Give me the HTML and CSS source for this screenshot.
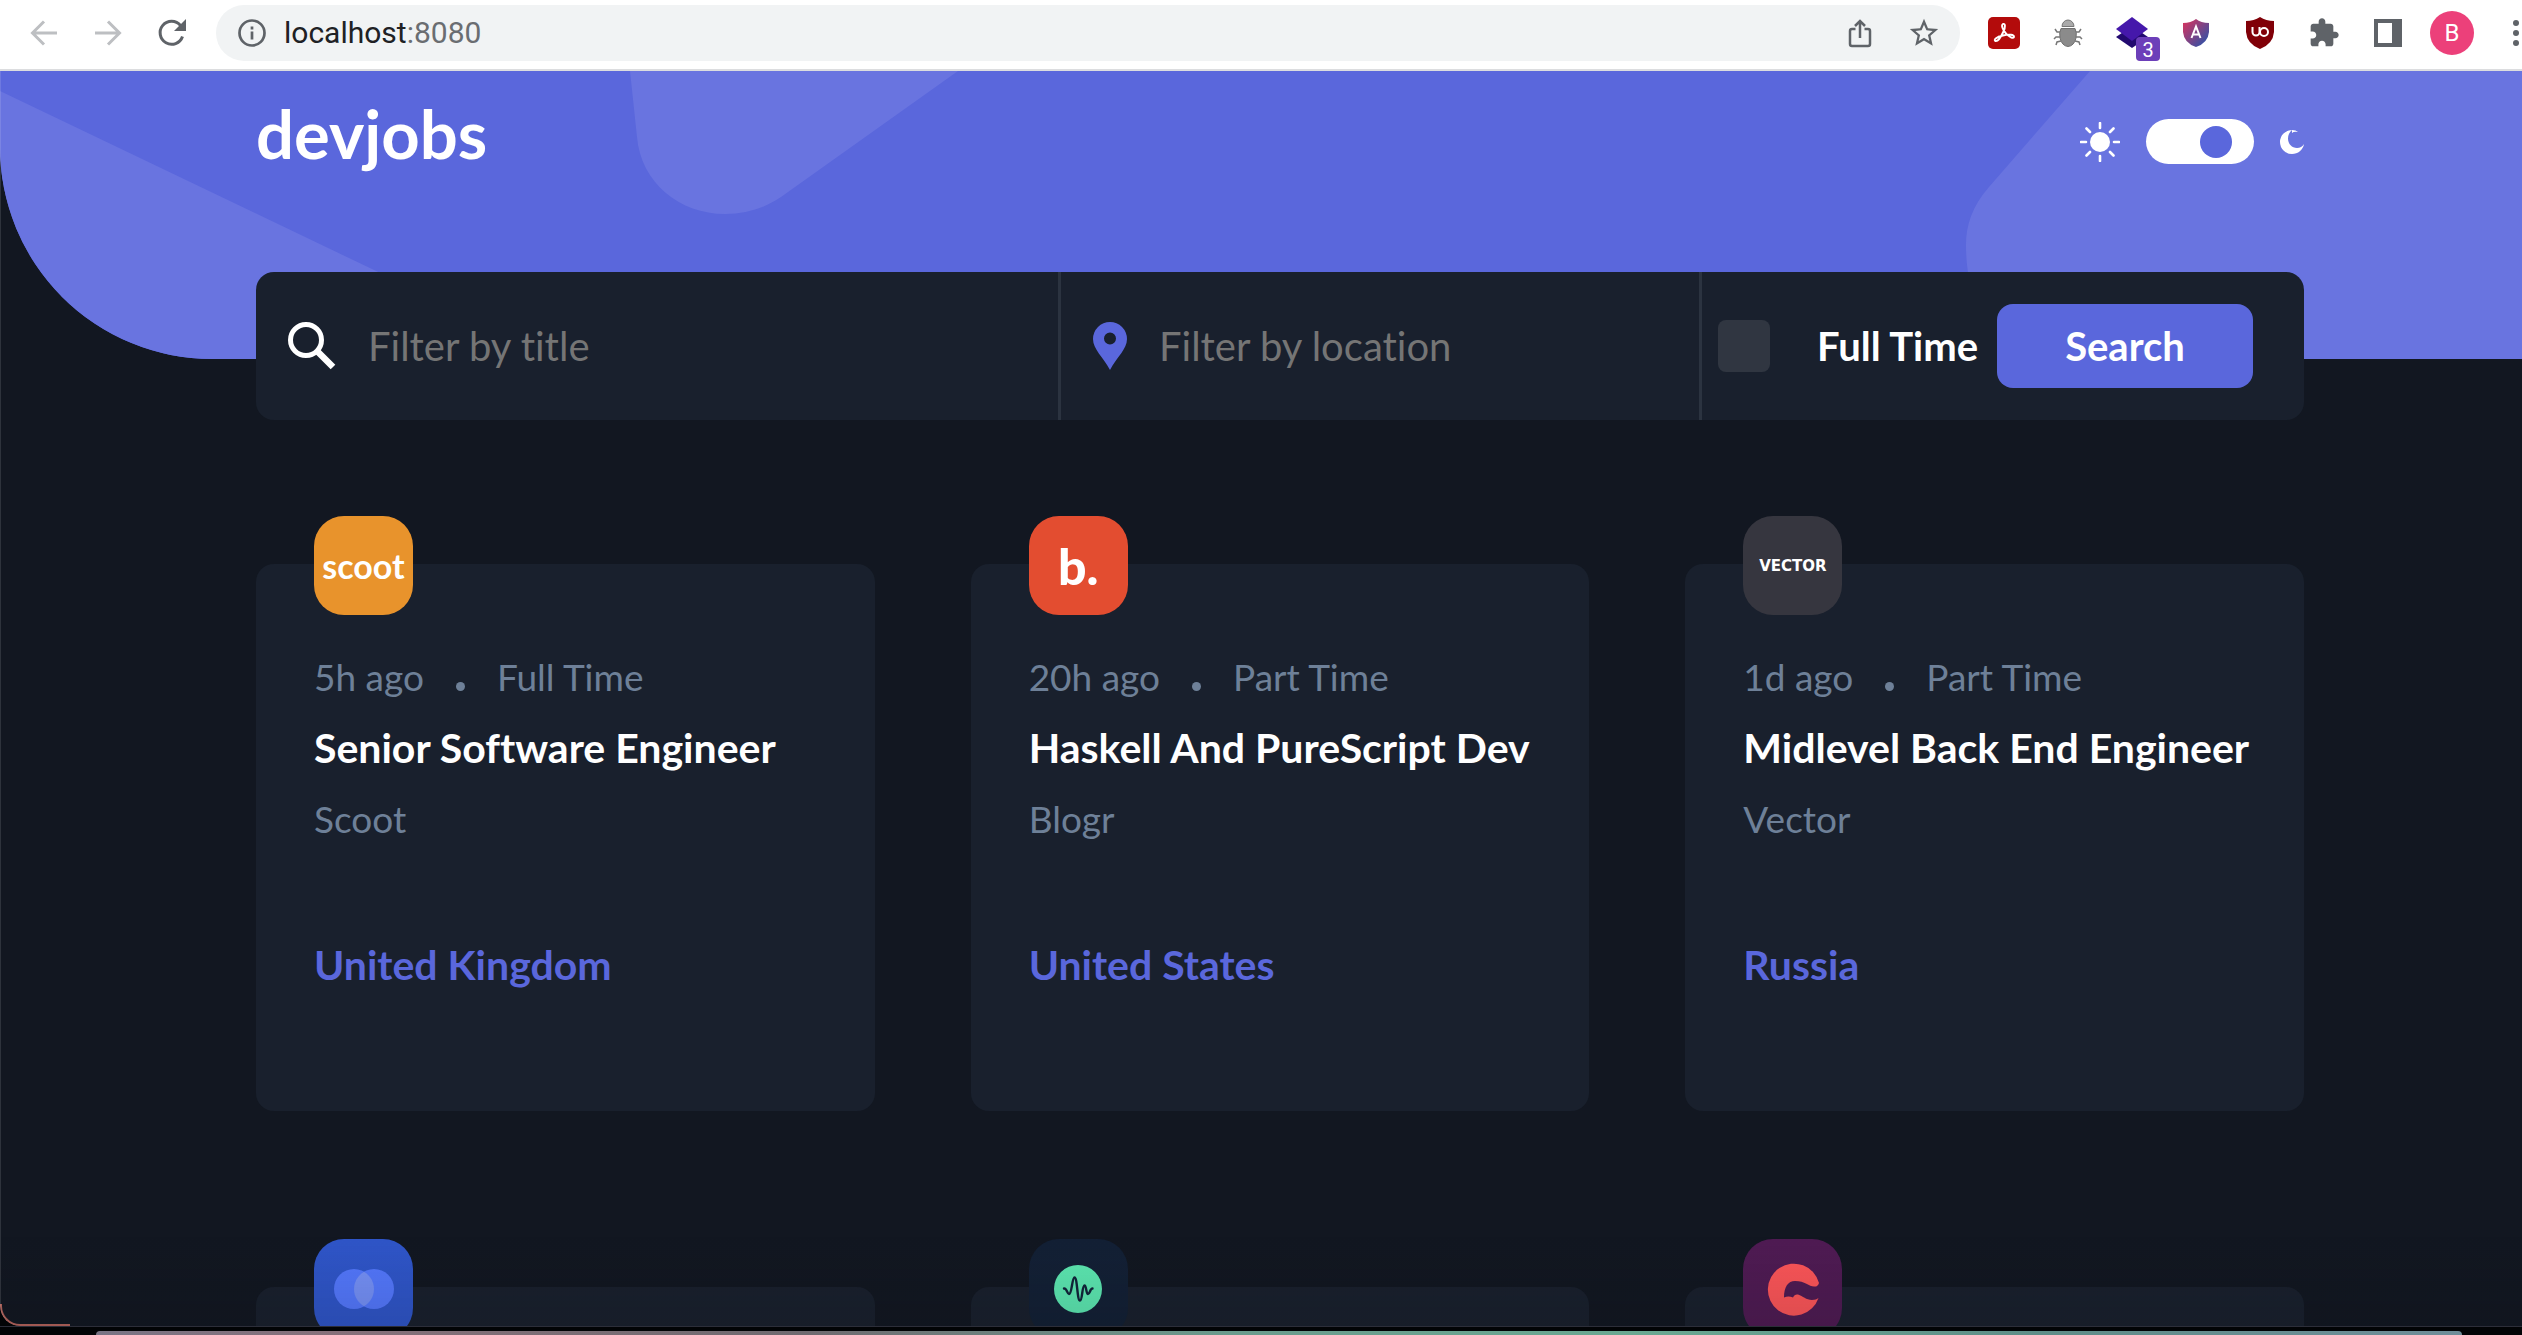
FILE: index.html
```html
<!DOCTYPE html>
<html lang="en">
<head>
<meta charset="utf-8">
<meta name="viewport" content="width=device-width, initial-scale=1">
<title>devjobs</title>
<link rel="stylesheet" href="styles.css">
</head>
<body>
<div class="toolbar">
  <div class="toolbar-group">
    <button class="tool" type="button" aria-label="Back" disabled>
      <svg width="28" height="28" viewBox="0 0 28 28" fill="none" stroke="#bdbfc2" stroke-width="3"><path d="M27 14H3M14 2.500 2.500 14 14 25.500"/></svg>
    </button>
    <button class="tool" type="button" aria-label="Forward" disabled>
      <svg width="28" height="28" viewBox="0 0 28 28" fill="none" stroke="#bdbfc2" stroke-width="3"><path d="M1 14H25M14 2.500 25.500 14 14 25.500"/></svg>
    </button>
    <button class="tool" type="button" aria-label="Reload">
      <svg width="30" height="30" viewBox="0 0 30 30" fill="none"><path d="M25.500 18.500A11.500 11.500 0 1 1 23.500 7.500" stroke="#5f6368" stroke-width="3"/><path d="M29 1V13H17Z" fill="#5f6368"/></svg>
    </button>
  </div>
  <div class="address">
    <svg width="28" height="28" viewBox="0 0 28 28" fill="none" stroke="#5f6368" stroke-width="2.700"><circle cx="14" cy="14" r="12.500"/><path d="M14 12.500V20.500M14 7.500V10.500"/></svg>
    <span class="address-text">localhost<span class="address-port">:8080</span></span>
    <button class="tool" type="button" aria-label="Share">
      <svg width="24" height="30" viewBox="0 0 24 30" fill="none" stroke="#5f6368" stroke-width="2.500"><path d="M7.500 11H4Q2 11 2 13V26Q2 28 4 28H20Q22 28 22 26V13Q22 11 20 11H16.500M12 20V3M7 8 12 3 17 8"/></svg>
    </button>
    <button class="tool" type="button" aria-label="Bookmark">
      <svg width="34" height="34" viewBox="0 0 24 24" fill="#5f6368"><path d="M22 9.240l-7.190-.62L12 2 9.190 8.630 2 9.240l5.460 4.730L5.820 21 12 17.270 18.180 21l-1.630-7.030L22 9.240zM12 15.400l-3.760 2.270 1-4.280-3.320-2.880 4.380-.38L12 6.100l1.710 4.040 4.380.38-3.320 2.880 1 4.280L12 15.400z"/></svg>
    </button>
  </div>
  <div class="toolbar-group">
    <button class="tool" type="button" aria-label="PDF">
      <svg width="32" height="32" viewBox="0 0 32 32"><rect width="32" height="32" rx="5" fill="#b30b0b"/><path d="M15 7C17.500 6 17.500 10 15.500 14.500 13 20 9.500 24.500 7.500 24 5 23 9 19.500 15 18.500 21 17 26.500 17.500 26 20 25.500 22 21 20 18 16.500 14.500 13 13 8 15 7Z" fill="none" stroke="#fff" stroke-width="1.900"/></svg>
    </button>
    <button class="tool" type="button" aria-label="Bug tracker">
      <svg width="30" height="30" viewBox="0 0 30 30"><path d="M9 8.500A6 6.500 0 0 1 21 8.500Z" fill="#aaa" stroke="#777"/><path d="M8 10.500H22Q24 14 23 20 21 28 15 28.500 9 28 7 20 6 14 8 10.500Z" fill="#8b8b8b" stroke="#707070"/><path d="M7 14 4 14 2 11M7 19H3L1 21M8 23 4 24 3 27M23 14 26 14 28 11M23 19H27L29 21M22 23 26 24 27 27" fill="none" stroke="#777" stroke-width="1.500"/></svg>
    </button>
    <button class="tool layers" type="button" aria-label="Layers">
      <svg width="32" height="32" viewBox="0 0 32 32"><path d="M0 20 16 9 32 20 16 31Z" fill="#230a70"/><path d="M0 12 16 0 32 12 16 24Z" fill="#4518ab"/></svg>
      <span class="layers-count">3</span>
    </button>
    <button class="tool" type="button" aria-label="Accessibility audit">
      <svg width="26" height="28" viewBox="0 0 26 28"><defs><linearGradient id="shield" x1="0" y1="0" x2="1" y2="1"><stop offset="0" stop-color="#e0325a"/><stop offset="1" stop-color="#1a55b0"/></linearGradient></defs><path d="M13 0Q18 4 26 4V13Q25 24 13 28 1 24 0 13V4Q8 4 13 0Z" fill="url(#shield)"/><path d="M8.500 19 13 7.500 17.500 19M10 15.500H16" fill="none" stroke="#fff" stroke-width="2"/></svg>
    </button>
    <button class="tool" type="button" aria-label="Content blocker">
      <svg width="28" height="32" viewBox="0 0 28 32"><path d="M14 0Q20 4 28 4V15Q27 27 14 32 1 27 0 15V4Q8 4 14 0Z" fill="#800008"/><path d="M6.500 10V15A3.500 3.500 0 0 0 13.500 15V10" fill="none" stroke="#fff" stroke-width="2"/><circle cx="18" cy="15" r="4" fill="none" stroke="#fff" stroke-width="2"/></svg>
    </button>
    <button class="tool" type="button" aria-label="Extensions">
      <svg width="32" height="32" viewBox="0 0 24 24" fill="#5f6368"><path d="M20.500 11H19V7c0-1.100-.9-2-2-2h-4V3.500C13 2.120 11.880 1 10.500 1S8 2.120 8 3.500V5H4c-1.100 0-2 .9-2 2v3.800h1.500c1.500 0 2.700 1.200 2.700 2.700S5 16.200 3.500 16.200H2V20c0 1.100.9 2 2 2h3.800v-1.500c0-1.500 1.200-2.700 2.700-2.700s2.700 1.200 2.700 2.700V22H17c1.100 0 2-.9 2-2v-4h1.500c1.380 0 2.500-1.120 2.500-2.500S21.880 11 20.500 11z"/></svg>
    </button>
    <button class="tool" type="button" aria-label="Side panel">
      <svg width="28" height="28" viewBox="0 0 28 28"><path d="M0 0H28V28H0ZM4 4V24H18V4Z" fill="#5f6368" fill-rule="evenodd"/></svg>
    </button>
    <button class="tool" type="button" aria-label="Profile"><span class="avatar">B</span></button>
    <button class="tool tool-menu" type="button" aria-label="Menu">
      <svg width="12" height="28" viewBox="0 0 12 28" fill="#5f6368"><circle cx="6" cy="4" r="3"/><circle cx="6" cy="14" r="3"/><circle cx="6" cy="24" r="3"/></svg>
    </button>
  </div>
</div>

<div class="page">
  <header class="hero">
    <svg class="hero-art" viewBox="0 0 2522 288" preserveAspectRatio="xMinYMin slice" fill="#6974e0">
      <path d="M0 20 560 288H0Z"/>
      <path d="M630 0 637 66C641 112 680 143 725 143 750 143 770 135 788 121L958 0Z"/>
      <path d="M2090 0 1989 116C1972 135 1966 155 1966 174 1966 225 1985 262 2020 288H2522V0Z"/>
    </svg>
    <div class="hero-row">
      <a class="brand" href="#">devjobs</a>
      <div class="theme">
        <svg width="40" height="40" viewBox="0 0 40 40"><circle cx="20" cy="20" r="10" fill="#fff"/><path d="M20 1V6M20 34V39M1 20H6M34 20H39M6.500 6.500 10 10M30 30 33.500 33.500M6.500 33.500 10 30M30 10 33.500 6.500" stroke="#fff" stroke-width="2.600" stroke-linecap="round"/></svg>
        <input class="theme-switch" type="checkbox" role="switch" aria-label="Dark theme" checked>
        <svg width="24" height="24" viewBox="0 0 24 24"><path d="M12 0C9.500 2 8 5 8 8.500 8 14 12 18 17 18 20 18 22.500 16.500 24 14 23 20 18 24 12 24A12 12 0 0 1 12 0ZM12 0Q16 0 18 2 14 1 12 3Z" fill="#fff"/></svg>
      </div>
    </div>
  </header>

  <main class="content">
    <form class="filters">
      <label class="filter">
        <svg width="48" height="48" viewBox="0 0 48 48" fill="none" stroke="#fff"><circle cx="18" cy="18" r="15.500" stroke-width="5"/><path d="M30 30 45 45" stroke-width="6.500"/></svg>
        <input class="filter-input" type="text" placeholder="Filter by title" aria-label="Filter by title">
      </label>
      <label class="filter">
        <svg width="34" height="48" viewBox="0 0 34 48"><path d="M17 0A17 17 0 0 1 34 17C34 27 24 35 17 48 10 35 0 27 0 17A17 17 0 0 1 17 0ZM17 10.500A6 6 0 1 0 17 22.500 6 6 0 0 0 17 10.500Z" fill="#5a67dc"/></svg>
        <input class="filter-input" type="text" placeholder="Filter by location" aria-label="Filter by location">
      </label>
      <div class="filter-end">
        <label class="fulltime"><input class="fulltime-box" type="checkbox">Full Time</label>
        <button class="search" type="submit">Search</button>
      </div>
    </form>

    <section class="jobs">
      <article class="job">
        <div class="logo logo-scoot">scoot</div>
        <p class="muted meta"><span>5h ago</span><i class="dot"></i><span>Full Time</span></p>
        <h2 class="title">Senior Software Engineer</h2>
        <p class="muted">Scoot</p>
        <p class="place">United Kingdom</p>
      </article>
      <article class="job">
        <div class="logo logo-blogr">b.</div>
        <p class="muted meta"><span>20h ago</span><i class="dot"></i><span>Part Time</span></p>
        <h2 class="title">Haskell And PureScript Dev</h2>
        <p class="muted">Blogr</p>
        <p class="place">United States</p>
      </article>
      <article class="job">
        <div class="logo logo-vector">VECTOR</div>
        <p class="muted meta"><span>1d ago</span><i class="dot"></i><span>Part Time</span></p>
        <h2 class="title">Midlevel Back End Engineer</h2>
        <p class="muted">Vector</p>
        <p class="place">Russia</p>
      </article>
      <article class="job">
        <div class="logo logo-circles">
          <svg width="98" height="98" viewBox="0 0 98 98"><circle cx="39" cy="49" r="20" fill="#5377fb"/><circle cx="59" cy="49" r="20" fill="#5377fb"/><path d="M49 31.700A20 20 0 0 1 49 66.300 20 20 0 0 1 49 31.700Z" fill="#748ff5"/></svg>
        </div>
      </article>
      <article class="job">
        <div class="logo logo-pulse">
          <svg width="98" height="98" viewBox="0 0 98 98"><circle cx="49" cy="49" r="24" fill="#5ce6b0"/><path d="M35 48.500C38 48 38 54 40 54 43 54 43 37.500 45.500 37.500 48.500 37.500 48 60.500 51 60.500 53.500 60.500 53 45.500 55.500 45.500 57.500 45.500 57 54 59 54 61 54 61 48.500 63.500 48.500" fill="none" stroke="#12243a" stroke-width="2.400" stroke-linecap="round"/></svg>
        </div>
      </article>
      <article class="job">
        <div class="logo logo-coffee">
          <svg width="98" height="98" viewBox="0 0 98 98"><path d="M75 43C74 46 72 47 70 46.500 65 46.500 61 41 51 41 44 41 40 47 40 57.500 43 56 46 56 49 57.500 50 55 52 54 54 54.500 59 56 62 60 68 60 71 60 73 59 74.500 58A26 26 0 1 1 75 43Z" fill="#fb5558"/></svg>
        </div>
      </article>
    </section>
  </main>
</div>

<div class="desktop"><div class="desktop-window"></div></div>
</body>
</html>
```
FILE: styles.css
```css
* { box-sizing: border-box; }

body {
  margin: 0;
  height: 100vh;
  overflow: hidden;
  display: flex;
  flex-direction: column;
  background: #020406;
  color: #fff;
  font-family: Lato, "Liberation Sans", sans-serif;
  font-size: 40px;
  font-variant-ligatures: none;
}

button, input { font: inherit; color: inherit; font-variant-ligatures: none; }
button { border: 0; padding: 0; cursor: pointer; }
p, h2 { margin: 0; }
svg { display: block; flex: none; }

/* Browser toolbar */
.toolbar {
  flex: none;
  display: flex;
  gap: 12px;
  padding: 5px 0 8px 12px;
  background: #fff;
  border-bottom: 2px solid #dcdddf;
  font-family: Roboto, "Liberation Sans", sans-serif;
}
.toolbar-group { display: flex; height: 56px; }
.tool {
  width: 64px;
  display: flex;
  align-items: center;
  justify-content: center;
  background: none;
}
.tool-menu { width: 38px; justify-content: flex-end; }
.address {
  flex: 1;
  display: flex;
  align-items: center;
  height: 56px;
  padding: 0 4px 0 22px;
  border-radius: 28px;
  background: #f1f3f4;
}
.address .tool { height: 56px; }
.address-text {
  flex: 1;
  padding-left: 18px;
  font-size: 30px;
  line-height: 36px;
  color: #202124;
}
.address-port { color: #6a6d71; }
.layers { position: relative; }
.layers-count {
  position: absolute;
  right: 4px;
  bottom: 0;
  width: 24px;
  height: 24px;
  border-radius: 4px;
  background: #6c3fb9;
  color: #fff;
  font-size: 20px;
  line-height: 26px;
}
.avatar {
  width: 44px;
  height: 44px;
  border-radius: 50%;
  background: #ec407a;
  color: #fff;
  font-size: 24px;
  line-height: 44px;
}

/* Page */
.page {
  position: relative;
  flex: 1;
  min-height: 0;
  overflow: hidden;
  background: #121721;
  border-bottom-left-radius: 20px;
}
.page::after {
  content: "";
  position: absolute;
  inset: 0;
  border-left: 1px solid rgba(255, 255, 255, 0.12);
  border-bottom-left-radius: 20px;
  background: linear-gradient(to top, rgba(10, 12, 16, 0.12), transparent 90px);
  pointer-events: none;
}
/* Warm glint along the window's lower left corner */
.page::before {
  content: "";
  position: absolute;
  left: 0;
  bottom: 0;
  width: 68px;
  height: 20px;
  border: solid #b5645c;
  border-width: 0 0 2px 2px;
  border-bottom-left-radius: 20px;
}
.hero {
  position: relative;
  min-height: 288px;
  padding: 22px 218px 0 256px;
  overflow: hidden;
  border-bottom-left-radius: 212px;
  background: #5a67dc;
}
.hero-art {
  position: absolute;
  inset: 0;
  width: 100%;
  height: 100%;
}
.hero-row {
  position: relative;
  display: flex;
  justify-content: space-between;
  align-items: flex-start;
}
.brand {
  color: #fff;
  font-size: 67px;
  font-weight: 700;
  line-height: 80px;
  text-decoration: none;
}
.theme {
  display: flex;
  align-items: center;
  gap: 26px;
  padding-top: 26px;
}
.theme-switch {
  appearance: none;
  width: 108px;
  height: 45px;
  margin: 0;
  padding: 7px 22px;
  display: flex;
  justify-content: flex-start;
  border-radius: 23px;
  background: #fff;
}
.theme-switch::before {
  content: "";
  width: 32px;
  height: 32px;
  border-radius: 50%;
  background: #5a67dc;
}
.theme-switch:checked { justify-content: flex-end; }

.content {
  position: relative;
  margin-top: -87px;
  padding: 0 218px 0 256px;
}

/* Filters */
.filters {
  display: grid;
  grid-template-columns: 805fr 641fr 602fr;
  height: 148px;
  border-radius: 18px;
  background: #19202d;
}
.filter {
  display: flex;
  align-items: center;
  gap: 32px;
  padding-left: 32px;
  border-right: 3px solid #2b3340;
}
.filter-input {
  flex: 1;
  min-width: 0;
  padding: 0;
  border: 0;
  outline: 0;
  background: none;
}
.filter-input::placeholder { color: #757575; opacity: 1; }
.filter-end {
  display: flex;
  align-items: center;
  justify-content: space-between;
  padding: 0 51px 0 16px;
}
.fulltime {
  display: flex;
  align-items: center;
  gap: 47px;
  font-weight: 700;
  white-space: nowrap;
}
.fulltime-box {
  appearance: none;
  width: 52px;
  height: 52px;
  margin: 0;
  border-radius: 8px;
  background: #303641;
}
.search {
  width: 256px;
  height: 84px;
  border-radius: 16px;
  background: #5a67dc;
  color: #fff;
  font-weight: 700;
}

/* Job cards */
.jobs {
  display: grid;
  grid-template-columns: repeat(3, minmax(0, 1fr));
  gap: 176px 96px;
  margin-top: 144px;
}
.job {
  position: relative;
  display: flex;
  flex-direction: column;
  gap: 24px;
  min-height: 547px;
  padding: 91px 58px 58px;
  border-radius: 18px;
  background: #19202d;
}
.logo {
  position: absolute;
  top: -48px;
  left: 58px;
  width: 99px;
  height: 99px;
  display: flex;
  align-items: center;
  justify-content: center;
  border-radius: 30px;
}
.logo-scoot { background: #e8932c; font-size: 34px; font-weight: 700; }
.logo-blogr { background: #e34d30; font-size: 50px; font-weight: 900; }
.logo-vector {
  background: #36363f;
  font-family: "DejaVu Sans", sans-serif;
  font-size: 15px;
  font-weight: 700;
}
.logo-circles { background: #2f55c8; }
.logo-pulse { background: #132035; }
.logo-coffee { background: #4f1b53; }
.muted {
  color: #6e8098;
  font-size: 37px;
  line-height: 44px;
}
.meta { display: flex; align-items: baseline; gap: 32px; }
.dot {
  width: 9px;
  height: 9px;
  border-radius: 50%;
  background: #6e8098;
}
.title, .place {
  font-size: 41px;
  font-weight: 700;
  line-height: 50px;
  white-space: nowrap;
}
.place { margin-top: 75px; color: #5a67dc; }

/* Desktop edge below the browser window */
.desktop {
  flex: none;
  height: 9px;
  padding: 4px 60px 0 96px;
  border-top: 1px solid #2c2e39;
}
.desktop-window {
  height: 4px;
  border-radius: 16px 16px 0 0;
  background: linear-gradient(to right, #797485, #87707a 10%, #6f6a70 30%, #6a9b8d 48%, #6aa892 65%, #5f8d88 82%, #6f8d99);
}
```
